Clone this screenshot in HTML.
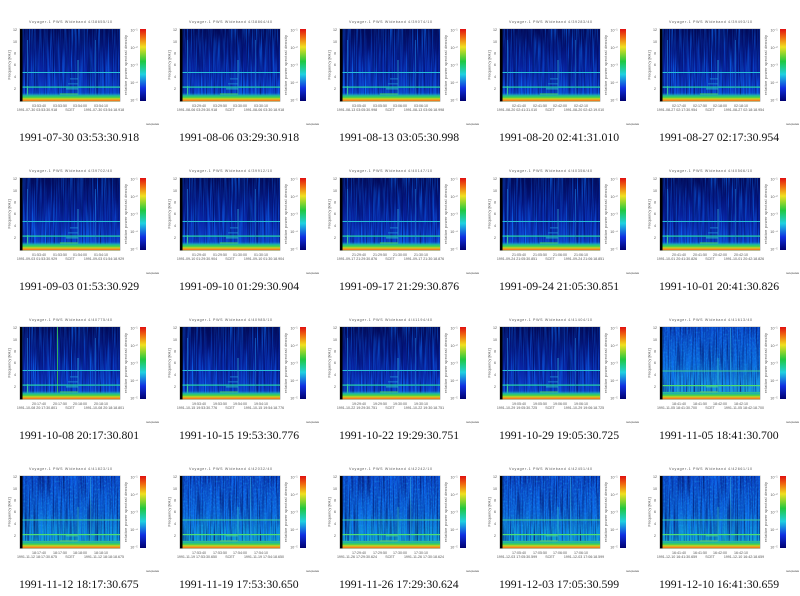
<!DOCTYPE html>
<html><head><meta charset="utf-8"><title>Voyager-1 PWS Wideband</title>
<style>
html,body{margin:0;padding:0;background:#fff;width:800px;height:596px;overflow:hidden}
svg{display:block}
.t{font:4px "Liberation Sans",sans-serif;fill:#555}
.s{font:3.6px "Liberation Sans",sans-serif;fill:#555;text-anchor:middle}
.c{font:11.75px "Liberation Serif",serif;fill:#111}
</style></head><body>
<svg xmlns="http://www.w3.org/2000/svg" width="800" height="596" viewBox="0 0 800 596">
<defs>
<linearGradient id="gd" x1="0" y1="0" x2="0" y2="1"><stop offset="0" stop-color="#020a58"/><stop offset=".3" stop-color="#041680"/><stop offset=".6" stop-color="#0826a8"/><stop offset=".85" stop-color="#0c3cc8"/><stop offset="1" stop-color="#1070d8"/></linearGradient>
<linearGradient id="gm" x1="0" y1="0" x2="0" y2="1"><stop offset="0" stop-color="#0a44c8"/><stop offset=".5" stop-color="#0c68d8"/><stop offset=".85" stop-color="#1a98dc"/><stop offset="1" stop-color="#20c0c0"/></linearGradient>
<linearGradient id="gb" x1="0" y1="0" x2="0" y2="1"><stop offset="0" stop-color="#0a40c4"/><stop offset=".5" stop-color="#0c62d8"/><stop offset=".85" stop-color="#10a0d4"/><stop offset="1" stop-color="#20c8b0"/></linearGradient>
<linearGradient id="gc" x1="0" y1="0" x2="0" y2="1"><stop offset="0" stop-color="#e01010"/><stop offset=".12" stop-color="#f07010"/><stop offset=".25" stop-color="#f0e020"/><stop offset=".45" stop-color="#20c840"/><stop offset=".63" stop-color="#20d0e0"/><stop offset=".82" stop-color="#1030e0"/><stop offset="1" stop-color="#000070"/></linearGradient>
<linearGradient id="gf" x1="0" y1="0" x2="0" y2="1"><stop offset="0" stop-color="#20a0d0" stop-opacity="0"/><stop offset=".3" stop-color="#20b8a0"/><stop offset=".5" stop-color="#40d050"/><stop offset=".68" stop-color="#c8d020"/><stop offset=".84" stop-color="#f09020"/><stop offset=".92" stop-color="#f07020"/><stop offset="1" stop-color="#80c030"/></linearGradient>
<filter id="s1" x="0" y="0" width="1" height="1" color-interpolation-filters="sRGB"><feTurbulence type="fractalNoise" baseFrequency="0.85 0.02" numOctaves="2" seed="1"/><feColorMatrix values="0 0 0 0 .05 0 0 0 0 .45 0 0 0 0 1 2.2 0 0 0 -1"/></filter>
<filter id="s2" x="0" y="0" width="1" height="1" color-interpolation-filters="sRGB"><feTurbulence type="fractalNoise" baseFrequency="0.8 0.025" numOctaves="2" seed="7"/><feColorMatrix values="0 0 0 0 .05 0 0 0 0 .45 0 0 0 0 1 2.2 0 0 0 -1"/></filter>
<filter id="s3" x="0" y="0" width="1" height="1" color-interpolation-filters="sRGB"><feTurbulence type="fractalNoise" baseFrequency="0.9 0.018" numOctaves="2" seed="13"/><feColorMatrix values="0 0 0 0 .05 0 0 0 0 .45 0 0 0 0 1 2.2 0 0 0 -1"/></filter>
<filter id="n1" x="0" y="0" width="1" height="1" color-interpolation-filters="sRGB"><feTurbulence type="fractalNoise" baseFrequency="0.75 0.02" numOctaves="2" seed="21"/><feColorMatrix values="0 0 0 0 0 0 0 0 0 .04 0 0 0 0 .35 2.2 0 0 0 -1"/></filter>
<filter id="n2" x="0" y="0" width="1" height="1" color-interpolation-filters="sRGB"><feTurbulence type="fractalNoise" baseFrequency="0.85 0.025" numOctaves="2" seed="33"/><feColorMatrix values="0 0 0 0 0 0 0 0 0 .04 0 0 0 0 .35 2.2 0 0 0 -1"/></filter>
<filter id="sp" x="0" y="0" width="1" height="1" color-interpolation-filters="sRGB"><feTurbulence type="fractalNoise" baseFrequency="0.7 0.5" numOctaves="2" seed="5"/><feColorMatrix values="0 0 0 0 .1 0 0 0 0 .65 0 0 0 0 .95 2.6 0 0 0 -1.05"/></filter>
<g id="ax">
<rect x="20" y="93" width="100" height="8.500" fill="url(#gf)"/>
<rect x="20" y="29" width="2.500" height="72.500" fill="#000"/>
<rect x="140" y="29" width="6" height="72" fill="url(#gc)"/>
<rect x="19.700" y="28.700" width="100.600" height="72.800" fill="none" stroke="#888" stroke-width=".3"/>
<text class="s" x="15" y="31">12</text><text class="s" x="15" y="43">10</text><text class="s" x="15" y="54.500">8</text><text class="s" x="15" y="66">6</text><text class="s" x="15" y="78">4</text><text class="s" x="15" y="90">2</text>
<text class="t" transform="translate(10.500,65) rotate(-90)" text-anchor="middle">Frequency [kHz]</text>
<text class="t" transform="translate(127,65) rotate(-90)" text-anchor="middle" textLength="60">relative power spectral density</text>
<text class="s" x="134" y="31.500">10⁻¹</text><text class="s" x="134" y="49">10⁻²</text><text class="s" x="134" y="66.500">10⁻³</text><text class="s" x="134" y="84">10⁻⁴</text><text class="s" x="134" y="101.500">10⁻⁵</text>
<text class="s" x="70" y="111">SCET</text>
<text class="t" x="146" y="125" textLength="13" style="font-size:2.4px">www-pw.uiowa</text>
</g>
<g id="hd"><rect x="20" y="72" width="100" height="1" fill="#28c0d8"/><rect x="20" y="86.500" width="100" height="1.200" fill="#28d8a8"/><rect x="60" y="93.500" width="18" height="1.100" fill="#50e040"/><rect x="66" y="88.500" width="12" height=".8" fill="#28c8c0"/><rect x="68" y="83.500" width="10" height=".8" fill="#2090d8"/><rect x="70" y="78.500" width="8" height=".8" fill="#2090d8"/><rect x="77.500" y="60" width="1" height="36" fill="#2aa0d8" opacity=".8"/><rect x="27" y="40" width="1" height="54" fill="#2070c8" opacity=".7"/><rect x="27" y="86" width="1.200" height="10" fill="#30c0a0"/><rect x="95" y="40" width="1" height="56" fill="#2080d8" opacity=".5"/></g>
<g id="hb"><rect x="20" y="72.500" width="100" height="1" fill="#40d098"/><rect x="20" y="87" width="100" height="1.200" fill="#50e070"/><rect x="20" y="94" width="100" height="1" fill="#40d070"/><rect x="60" y="93.500" width="18" height="1.100" fill="#80e040"/><rect x="66" y="88.500" width="12" height=".8" fill="#40d0a0"/><rect x="77.500" y="60" width="1" height="36" fill="#30b8d0" opacity=".7"/><rect x="90" y="30" width="1.200" height="66" fill="#30b0e0" opacity=".5"/></g>
<g id="pd"><rect x="20" y="29" width="100" height="72" fill="url(#gd)"/></g>
<g id="pm"><rect x="20" y="29" width="100" height="72" fill="url(#gm)"/><rect x="22" y="29" width="98" height="67" filter="url(#sp)" opacity=".4"/></g>
<g id="pb"><rect x="20" y="29" width="100" height="72" fill="url(#gb)"/><rect x="22" y="29" width="98" height="67" filter="url(#sp)" opacity=".45"/></g>
<rect id="a1" x="22" y="29" width="98" height="67" filter="url(#s1)"/>
<rect id="a2" x="22" y="29" width="98" height="67" filter="url(#s2)"/>
<rect id="a3" x="22" y="29" width="98" height="67" filter="url(#s3)"/>
<rect id="b1" x="22" y="29" width="98" height="67" filter="url(#n1)"/>
<rect id="b2" x="22" y="29" width="98" height="67" filter="url(#n2)"/>
</defs>
<rect width="800" height="596" fill="#fff"/>

<g><use href="#pd"/><use href="#a1"/><use href="#b1"/><use href="#hd"/><use href="#ax"/><text class="s" x="70.500" y="23" textLength="83">Voyager-1 PWS Wideband  4/38655/10</text><text class="s" x="39" y="107">03:53:40</text><text class="s" x="60" y="107">03:53:50</text><text class="s" x="80" y="107">03:54:00</text><text class="s" x="101" y="107">03:54:10</text><text class="s" x="37" y="111">1991-07-30 03:53:30.918</text><text class="s" x="104" y="111">1991-07-30 03:54:18.918</text><text class="c" x="19" y="141">1991-07-30 03:53:30.918</text></g>

<g transform="translate(160,0)"><use href="#pd"/><use href="#a2"/><use href="#b2"/><use href="#hd"/><use href="#ax"/><text class="s" x="70.500" y="23" textLength="83">Voyager-1 PWS Wideband  4/38864/40</text><text class="s" x="39" y="107">03:29:40</text><text class="s" x="60" y="107">03:29:50</text><text class="s" x="80" y="107">03:30:00</text><text class="s" x="101" y="107">03:30:10</text><text class="s" x="37" y="111">1991-08-06 03:29:30.918</text><text class="s" x="104" y="111">1991-08-06 03:30:18.918</text><text class="c" x="19" y="141">1991-08-06 03:29:30.918</text></g>

<g transform="translate(320,0)"><use href="#pd"/><use href="#a3"/><use href="#b1"/><use href="#hd"/><use href="#ax"/><text class="s" x="70.500" y="23" textLength="83">Voyager-1 PWS Wideband  4/39074/10</text><text class="s" x="39" y="107">03:05:40</text><text class="s" x="60" y="107">03:05:50</text><text class="s" x="80" y="107">03:06:00</text><text class="s" x="101" y="107">03:06:10</text><text class="s" x="37" y="111">1991-08-13 03:05:30.998</text><text class="s" x="104" y="111">1991-08-13 03:06:18.998</text><text class="c" x="19" y="141">1991-08-13 03:05:30.998</text></g>

<g transform="translate(480,0)"><use href="#pd"/><use href="#a2"/><use href="#b1"/><use href="#hd"/><use href="#ax"/><text class="s" x="70.500" y="23" textLength="83">Voyager-1 PWS Wideband  4/39283/40</text><text class="s" x="39" y="107">02:41:40</text><text class="s" x="60" y="107">02:41:50</text><text class="s" x="80" y="107">02:42:00</text><text class="s" x="101" y="107">02:42:10</text><text class="s" x="37" y="111">1991-08-20 02:41:31.010</text><text class="s" x="104" y="111">1991-08-20 02:42:19.010</text><text class="c" x="19" y="141">1991-08-20 02:41:31.010</text></g>

<g transform="translate(640,0)"><use href="#pd"/><use href="#a1"/><use href="#b2"/><use href="#hd"/><use href="#ax"/><text class="s" x="70.500" y="23" textLength="83">Voyager-1 PWS Wideband  4/39493/10</text><text class="s" x="39" y="107">02:17:40</text><text class="s" x="60" y="107">02:17:50</text><text class="s" x="80" y="107">02:18:00</text><text class="s" x="101" y="107">02:18:10</text><text class="s" x="37" y="111">1991-08-27 02:17:30.954</text><text class="s" x="104" y="111">1991-08-27 02:18:18.954</text><text class="c" x="19" y="141">1991-08-27 02:17:30.954</text></g>

<g transform="translate(0,149)"><use href="#pd"/><use href="#a3"/><use href="#b2"/><use href="#hd"/><use href="#ax"/><text class="s" x="70.500" y="23" textLength="83">Voyager-1 PWS Wideband  4/39702/40</text><text class="s" x="39" y="107">01:53:40</text><text class="s" x="60" y="107">01:53:50</text><text class="s" x="80" y="107">01:54:00</text><text class="s" x="101" y="107">01:54:10</text><text class="s" x="37" y="111">1991-09-03 01:53:30.929</text><text class="s" x="104" y="111">1991-09-03 01:54:18.929</text><text class="c" x="19" y="141">1991-09-03 01:53:30.929</text></g>

<g transform="translate(160,149)"><use href="#pd"/><use href="#a1"/><use href="#b1"/><use href="#hd"/><use href="#ax"/><text class="s" x="70.500" y="23" textLength="83">Voyager-1 PWS Wideband  4/39912/10</text><text class="s" x="39" y="107">01:29:40</text><text class="s" x="60" y="107">01:29:50</text><text class="s" x="80" y="107">01:30:00</text><text class="s" x="101" y="107">01:30:10</text><text class="s" x="37" y="111">1991-09-10 01:29:30.904</text><text class="s" x="104" y="111">1991-09-10 01:30:18.904</text><text class="c" x="19" y="141">1991-09-10 01:29:30.904</text></g>

<g transform="translate(320,149)"><use href="#pd"/><use href="#a2"/><use href="#b2"/><use href="#hd"/><use href="#ax"/><text class="s" x="70.500" y="23" textLength="83">Voyager-1 PWS Wideband  4/40147/10</text><text class="s" x="39" y="107">21:29:40</text><text class="s" x="60" y="107">21:29:50</text><text class="s" x="80" y="107">21:30:00</text><text class="s" x="101" y="107">21:30:10</text><text class="s" x="37" y="111">1991-09-17 21:29:30.876</text><text class="s" x="104" y="111">1991-09-17 21:30:18.876</text><text class="c" x="19" y="141">1991-09-17 21:29:30.876</text></g>

<g transform="translate(480,149)"><use href="#pd"/><use href="#a3"/><use href="#b1"/><use href="#hd"/><use href="#ax"/><text class="s" x="70.500" y="23" textLength="83">Voyager-1 PWS Wideband  4/40356/40</text><text class="s" x="39" y="107">21:05:40</text><text class="s" x="60" y="107">21:05:50</text><text class="s" x="80" y="107">21:06:00</text><text class="s" x="101" y="107">21:06:10</text><text class="s" x="37" y="111">1991-09-24 21:05:30.851</text><text class="s" x="104" y="111">1991-09-24 21:06:18.851</text><text class="c" x="19" y="141">1991-09-24 21:05:30.851</text></g>

<g transform="translate(640,149)"><use href="#pd"/><use href="#a2"/><use href="#b1"/><use href="#hd"/><use href="#ax"/><text class="s" x="70.500" y="23" textLength="83">Voyager-1 PWS Wideband  4/40566/10</text><text class="s" x="39" y="107">20:41:40</text><text class="s" x="60" y="107">20:41:50</text><text class="s" x="80" y="107">20:42:00</text><text class="s" x="101" y="107">20:42:10</text><text class="s" x="37" y="111">1991-10-01 20:41:30.826</text><text class="s" x="104" y="111">1991-10-01 20:42:18.826</text><text class="c" x="19" y="141">1991-10-01 20:41:30.826</text></g>

<g transform="translate(0,298)"><use href="#pd"/><use href="#a1"/><use href="#b2"/><rect x="57" y="29" width="1" height="67" fill="#30b060"/><use href="#hd"/><use href="#ax"/><text class="s" x="70.500" y="23" textLength="83">Voyager-1 PWS Wideband  4/40775/40</text><text class="s" x="39" y="107">20:17:40</text><text class="s" x="60" y="107">20:17:50</text><text class="s" x="80" y="107">20:18:00</text><text class="s" x="101" y="107">20:18:10</text><text class="s" x="37" y="111">1991-10-08 20:17:30.801</text><text class="s" x="104" y="111">1991-10-08 20:18:18.801</text><text class="c" x="19" y="141">1991-10-08 20:17:30.801</text></g>

<g transform="translate(160,298)"><use href="#pd"/><use href="#a3"/><use href="#b1"/><use href="#hd"/><use href="#ax"/><text class="s" x="70.500" y="23" textLength="83">Voyager-1 PWS Wideband  4/40985/10</text><text class="s" x="39" y="107">19:53:40</text><text class="s" x="60" y="107">19:53:50</text><text class="s" x="80" y="107">19:54:00</text><text class="s" x="101" y="107">19:54:10</text><text class="s" x="37" y="111">1991-10-15 19:53:30.776</text><text class="s" x="104" y="111">1991-10-15 19:54:18.776</text><text class="c" x="19" y="141">1991-10-15 19:53:30.776</text></g>

<g transform="translate(320,298)"><use href="#pd"/><use href="#a2"/><use href="#b2"/><use href="#hd"/><use href="#ax"/><text class="s" x="70.500" y="23" textLength="83">Voyager-1 PWS Wideband  4/41194/40</text><text class="s" x="39" y="107">19:29:40</text><text class="s" x="60" y="107">19:29:50</text><text class="s" x="80" y="107">19:30:00</text><text class="s" x="101" y="107">19:30:10</text><text class="s" x="37" y="111">1991-10-22 19:29:30.751</text><text class="s" x="104" y="111">1991-10-22 19:30:18.751</text><text class="c" x="19" y="141">1991-10-22 19:29:30.751</text></g>

<g transform="translate(480,298)"><use href="#pd"/><use href="#a1"/><use href="#b1"/><use href="#hd"/><use href="#ax"/><text class="s" x="70.500" y="23" textLength="83">Voyager-1 PWS Wideband  4/41404/10</text><text class="s" x="39" y="107">19:05:40</text><text class="s" x="60" y="107">19:05:50</text><text class="s" x="80" y="107">19:06:00</text><text class="s" x="101" y="107">19:06:10</text><text class="s" x="37" y="111">1991-10-29 19:05:30.725</text><text class="s" x="104" y="111">1991-10-29 19:06:18.725</text><text class="c" x="19" y="141">1991-10-29 19:05:30.725</text></g>

<g transform="translate(640,298)"><use href="#pm"/><use href="#a3"/><use href="#b2"/><use href="#hb"/><use href="#ax"/><text class="s" x="70.500" y="23" textLength="83">Voyager-1 PWS Wideband  4/41613/40</text><text class="s" x="39" y="107">18:41:40</text><text class="s" x="60" y="107">18:41:50</text><text class="s" x="80" y="107">18:42:00</text><text class="s" x="101" y="107">18:42:10</text><text class="s" x="37" y="111">1991-11-05 18:41:30.700</text><text class="s" x="104" y="111">1991-11-05 18:42:18.700</text><text class="c" x="19" y="141">1991-11-05 18:41:30.700</text></g>

<g transform="translate(0,447)"><use href="#pb"/><use href="#a2"/><use href="#b1"/><use href="#hb"/><use href="#ax"/><text class="s" x="70.500" y="23" textLength="83">Voyager-1 PWS Wideband  4/41823/10</text><text class="s" x="39" y="107">18:17:40</text><text class="s" x="60" y="107">18:17:50</text><text class="s" x="80" y="107">18:18:00</text><text class="s" x="101" y="107">18:18:10</text><text class="s" x="37" y="111">1991-11-12 18:17:30.675</text><text class="s" x="104" y="111">1991-11-12 18:18:18.675</text><text class="c" x="19" y="141">1991-11-12 18:17:30.675</text></g>

<g transform="translate(160,447)"><use href="#pb"/><use href="#a1"/><use href="#b2"/><use href="#hb"/><use href="#ax"/><text class="s" x="70.500" y="23" textLength="83">Voyager-1 PWS Wideband  4/42032/40</text><text class="s" x="39" y="107">17:53:40</text><text class="s" x="60" y="107">17:53:50</text><text class="s" x="80" y="107">17:54:00</text><text class="s" x="101" y="107">17:54:10</text><text class="s" x="37" y="111">1991-11-19 17:53:30.650</text><text class="s" x="104" y="111">1991-11-19 17:54:18.650</text><text class="c" x="19" y="141">1991-11-19 17:53:30.650</text></g>

<g transform="translate(320,447)"><use href="#pb"/><use href="#a3"/><use href="#b1"/><use href="#hb"/><use href="#ax"/><text class="s" x="70.500" y="23" textLength="83">Voyager-1 PWS Wideband  4/42242/10</text><text class="s" x="39" y="107">17:29:40</text><text class="s" x="60" y="107">17:29:50</text><text class="s" x="80" y="107">17:30:00</text><text class="s" x="101" y="107">17:30:10</text><text class="s" x="37" y="111">1991-11-26 17:29:30.624</text><text class="s" x="104" y="111">1991-11-26 17:30:18.624</text><text class="c" x="19" y="141">1991-11-26 17:29:30.624</text></g>

<g transform="translate(480,447)"><use href="#pb"/><use href="#a2"/><use href="#b2"/><use href="#hb"/><use href="#ax"/><text class="s" x="70.500" y="23" textLength="83">Voyager-1 PWS Wideband  4/42451/40</text><text class="s" x="39" y="107">17:05:40</text><text class="s" x="60" y="107">17:05:50</text><text class="s" x="80" y="107">17:06:00</text><text class="s" x="101" y="107">17:06:10</text><text class="s" x="37" y="111">1991-12-03 17:05:30.599</text><text class="s" x="104" y="111">1991-12-03 17:06:18.599</text><text class="c" x="19" y="141">1991-12-03 17:05:30.599</text></g>

<g transform="translate(640,447)"><use href="#pb"/><use href="#a1"/><use href="#b1"/><use href="#hb"/><use href="#ax"/><text class="s" x="70.500" y="23" textLength="83">Voyager-1 PWS Wideband  4/42661/10</text><text class="s" x="39" y="107">16:41:40</text><text class="s" x="60" y="107">16:41:50</text><text class="s" x="80" y="107">16:42:00</text><text class="s" x="101" y="107">16:42:10</text><text class="s" x="37" y="111">1991-12-10 16:41:30.659</text><text class="s" x="104" y="111">1991-12-10 16:42:18.659</text><text class="c" x="19" y="141">1991-12-10 16:41:30.659</text></g>
</svg>
</body></html>
